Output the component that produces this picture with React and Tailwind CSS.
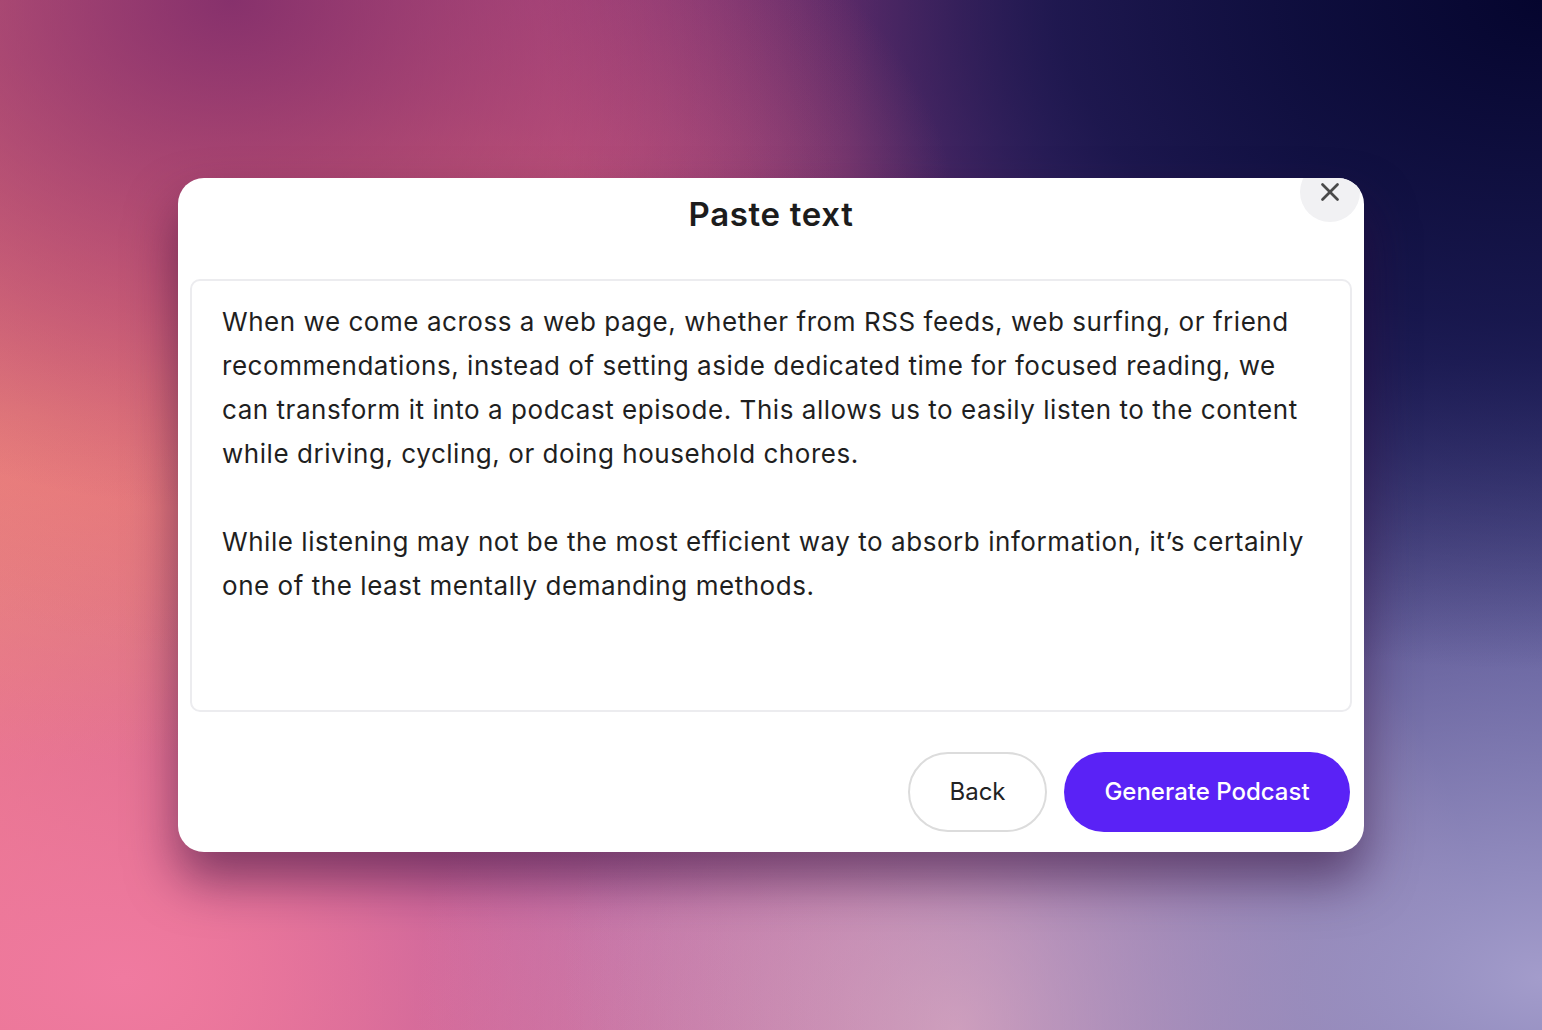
import { X } from 'lucide-react'

function App() {
  return (
    <div className="min-h-screen w-full flex items-start justify-center pt-[178px] font-['Inter',sans-serif] bg-[radial-gradient(ellipse_at_15%_0%,rgba(120,40,105,0.85)_0%,rgba(120,40,105,0)_35%),radial-gradient(ellipse_at_18%_22%,#e9697a_0%,rgba(233,105,122,0)_38%),radial-gradient(ellipse_at_2%_40%,#e98a7c_0%,rgba(233,138,124,0)_40%),radial-gradient(ellipse_at_100%_0%,#05052e_0%,rgba(15,15,65,0.8)_22%,rgba(30,28,90,0)_46%),radial-gradient(ellipse_at_100%_95%,#a39ccb_0%,rgba(163,156,203,0)_45%),radial-gradient(ellipse_at_62%_100%,#eaa0b4_0%,rgba(234,160,180,0)_40%),radial-gradient(ellipse_at_8%_95%,#f07aa0_0%,rgba(240,122,160,0)_40%),radial-gradient(ellipse_at_40%_86%,#9450a2_0%,rgba(148,80,162,0)_34%),linear-gradient(90deg,#e07080_0%,#b34c86_38%,#9a428a_55%,#5e3a86_68%,#3a3478_85%,#3b3a80_100%)]">
      <div className="relative w-[1186px] h-[674px] bg-white rounded-[26px] overflow-hidden shadow-[0_28px_50px_rgba(45,10,55,0.55)] flex flex-col">
        <button className="absolute -top-[16px] right-[4px] w-[60px] h-[60px] rounded-full bg-[#f1f1f3] flex items-center justify-center text-[#4a4a4a]">
          <X size={30} strokeWidth={2.2} />
        </button>

        <h2 className="text-[33px] leading-[40px] font-semibold tracking-[0.02em] text-[#1c1c1c] text-center pt-4">Paste text</h2>

        <div className="mx-3 mt-[45px] h-[433px] rounded-[10px] border-2 border-[#ececef] px-[30px] pt-[19px] text-[26px] leading-[44px] tracking-[0.021em] text-[#1f1f1f] whitespace-pre-line">
          {`When we come across a web page, whether from RSS feeds, web surfing, or friend recommendations, instead of setting aside dedicated time for focused reading, we can transform it into a podcast episode. This allows us to easily listen to the content while driving, cycling, or doing household chores.

While listening may not be the most efficient way to absorb information, it’s certainly one of the least mentally demanding methods.`}
        </div>

        <div className="flex justify-end gap-[17px] mt-10 px-[14px]">
          <button className="w-[139px] h-[80px] rounded-full border-2 border-[#dcdcdc] bg-white text-[24px] text-[#222]">
            Back
          </button>
          <button className="w-[286px] h-[80px] rounded-full bg-[#5a22f6] text-[24px] font-medium text-white">
            Generate Podcast
          </button>
        </div>
      </div>
    </div>
  )
}

export default App
